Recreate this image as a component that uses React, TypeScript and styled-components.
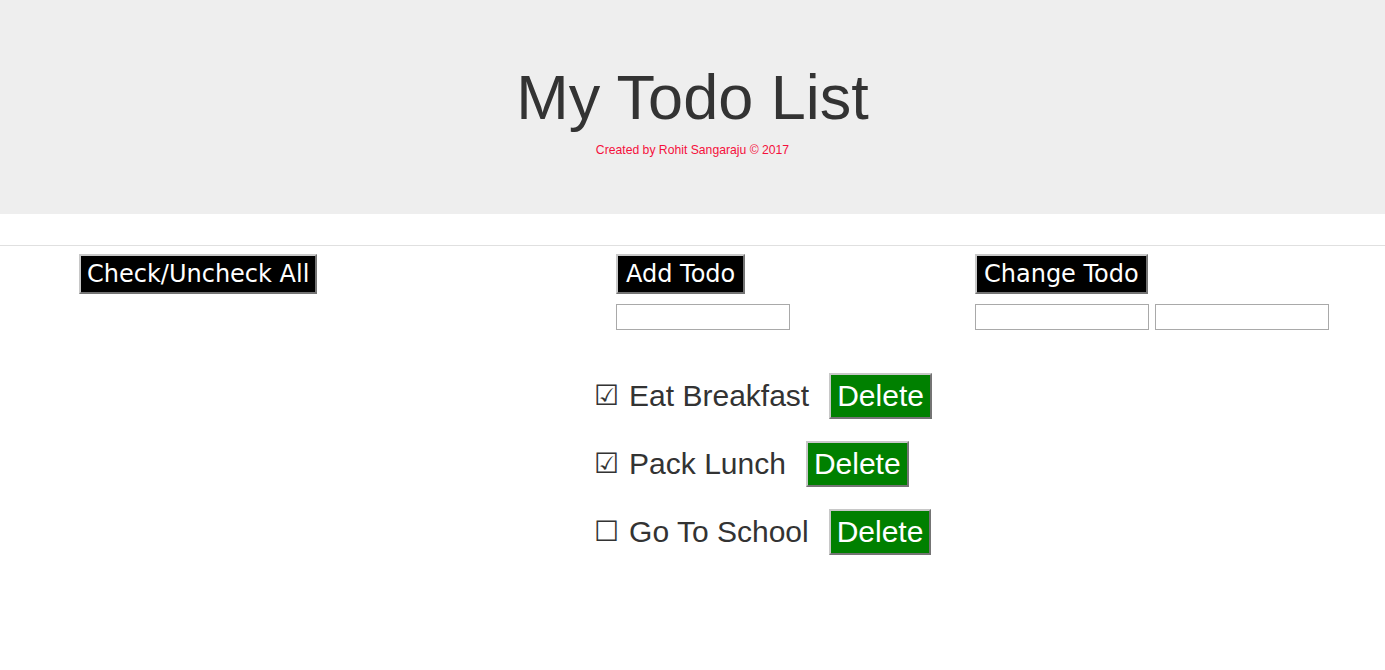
import React, { useState } from "react";
import styled, { createGlobalStyle } from "styled-components";

const Global = createGlobalStyle`
  html, body { margin: 0; padding: 0; background: #fff; }
  body { font-family: "Liberation Sans", Arial, sans-serif; color: #333; }
`;

const Header = styled.header`
  box-sizing: border-box;
  height: 214px;
  background: #eeeeee;
  padding-top: 61px;
  text-align: center;
`;

const Title = styled.h1`
  margin: 0;
  font-family: "Liberation Sans", Arial, sans-serif;
  font-weight: normal;
  font-size: 63px;
  color: #333;
`;

const Credit = styled.p`
  margin: 10px 0 0;
  font-size: 12.2px;
  color: #f5103c;
`;

const Rule = styled.hr`
  margin: 31px 0 8px;
  border: 0;
  border-top: 1px solid #e0e0e0;
  height: 0;
`;

const Controls = styled.div`
  display: grid;
  grid-template-columns: 537px 359px 1fr;
  padding-left: 79px;
`;

const Column = styled.div`
  display: flex;
  flex-direction: column;
  align-items: flex-start;
  gap: 10px;
`;

const DarkButton = styled.button<{ $shift?: number; $pad?: number }>`
  font-family: "DejaVu Sans", Verdana, sans-serif;
  font-size: 24px;
  line-height: 28px;
  color: #fff;
  background: #000;
  padding: 4px ${(p) => p.$pad ?? 6}px;
  margin: 0 0 0 ${(p) => p.$shift ?? 0}px;
  border: 2px outset #c8c8c8;
  cursor: pointer;
`;

const Inputs = styled.div`
  display: flex;
  gap: 6px;
`;

const TextInput = styled.input`
  box-sizing: border-box;
  width: 174px;
  height: 26px;
  margin: 0;
  border: 1px solid #a9a9a9;
  padding: 2px 4px;
  font-size: 14px;
`;

const List = styled.ul`
  list-style: none;
  margin: 43px 0 0;
  padding: 0 0 0 594px;
  display: flex;
  flex-direction: column;
  gap: 22px;
`;

const Row = styled.li`
  display: flex;
  align-items: center;
  gap: 20px;
  font-size: 30px;
  color: #333;
`;

const Label = styled.label`
  display: flex;
  align-items: center;
  gap: 10px;
  cursor: pointer;
`;

const Box = styled.span`
  font-family: "DejaVu Sans", sans-serif;
  font-weight: bold;
  font-size: 28px;
  line-height: 1;
  color: #333;
`;

const DeleteButton = styled.button`
  font-family: "Liberation Sans", Arial, sans-serif;
  font-size: 30px;
  line-height: 34px;
  color: #fff;
  background: #008000;
  padding: 4px 6px;
  margin: 0;
  border: 2px outset #c8c8c8;
  cursor: pointer;
`;

type Todo = { text: string; done: boolean };

export default function App() {
  const [todos, setTodos] = useState<Todo[]>([
    { text: "Eat Breakfast", done: true },
    { text: "Pack Lunch", done: true },
    { text: "Go To School", done: false },
  ]);

  return (
    <>
      <Global />
      <Header>
        <Title>My Todo List</Title>
        <Credit>Created by Rohit Sangaraju © 2017</Credit>
      </Header>
      <Rule />
      <Controls>
        <Column>
          <DarkButton>Check/Uncheck All</DarkButton>
        </Column>
        <Column>
          <DarkButton $pad={8}>Add Todo</DarkButton>
          <TextInput />
        </Column>
        <Column>
          <DarkButton $pad={7}>Change Todo</DarkButton>
          <Inputs>
            <TextInput />
            <TextInput />
          </Inputs>
        </Column>
      </Controls>
      <List>
        {todos.map((t, i) => (
          <Row key={t.text}>
            <Label
              onClick={() =>
                setTodos(todos.map((x, j) => (j === i ? { ...x, done: !x.done } : x)))
              }
            >
              <Box>{t.done ? "☑" : "☐"}</Box>
              <span>{t.text}</span>
            </Label>
            <DeleteButton>Delete</DeleteButton>
          </Row>
        ))}
      </List>
    </>
  );
}
